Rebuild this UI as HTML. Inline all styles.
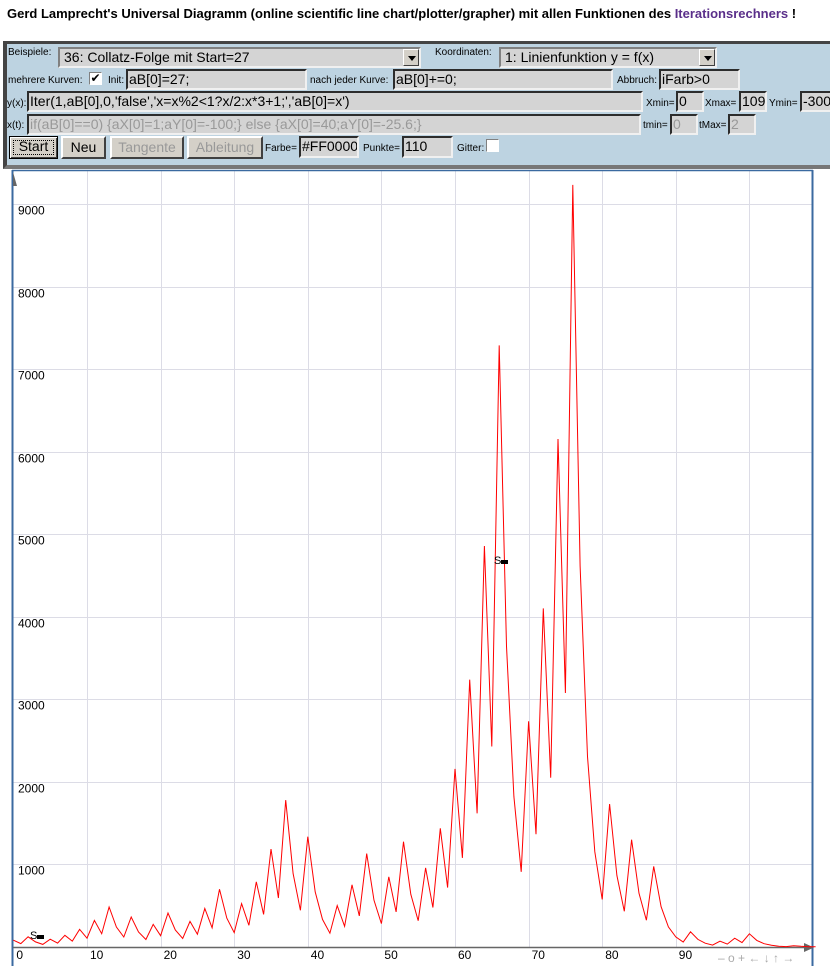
<!DOCTYPE html>
<html><head><meta charset="utf-8">
<style>
*{box-sizing:border-box}
body{margin:0;width:830px;height:966px;overflow:hidden;background:#fff;font-family:"Liberation Sans",Arial,sans-serif;position:relative}
.t{position:absolute;left:7px;top:6px;font-weight:bold;font-size:13px;color:#000;white-space:nowrap}
.t a{color:#5a2f8a;text-decoration:none}
.panel{position:absolute;left:3px;top:41px;width:840px;height:128px;background:#bdd3e1;border-top:3px solid #444;border-left:4px solid #444;border-bottom:4px solid #777}
.a{position:absolute;white-space:nowrap}
.l{font-size:10px;color:#000}
.in{position:absolute;height:21px;background:#d4d4d4;border:2px inset #eee;border-color:#808080 #f0f0f0 #f0f0f0 #808080;font-size:14px;line-height:17px;padding-left:1px;white-space:nowrap;overflow:hidden;color:#000}
.dis{color:#999}
.sel{position:absolute;height:21px;background:#d4d4d4;border:2px solid;border-color:#808080 #f0f0f0 #f0f0f0 #808080;font-size:14px;line-height:17px;padding-left:4px;white-space:nowrap}
.sel i{position:absolute;right:0;top:0;width:16px;height:17px;background:#d4d0c8;border:1px solid;border-color:#fff #404040 #404040 #fff}
.sel i:after{content:"";position:absolute;left:4px;top:6px;border:4px solid transparent;border-top:5px solid #000}
.btn{position:absolute;height:23px;background:#d4d0c8;border:2px solid;border-color:#fff #404040 #404040 #fff;font-size:14px;text-align:center;line-height:19px}
.cb{position:absolute;width:13px;height:13px;background:#fff;border:1px solid;border-color:#808080 #fff #fff #808080;font-size:12px;line-height:11px;text-align:center}
</style></head><body>
<div class="t">Gerd Lamprecht's Universal Diagramm (online scientific line chart/plotter/grapher) mit allen Funktionen des <a>Iterationsrechners</a> !</div>
<div class="panel"></div>
<div class="a l" style="left:8px;top:47px">Beispiele:</div>
<div class="sel" style="left:58px;top:47px;width:363px">36: Collatz-Folge mit Start=27<i></i></div>
<div class="a l" style="left:435px;top:47px">Koordinaten:</div>
<div class="sel" style="left:499px;top:47px;width:218px">1: Linienfunktion y = f(x)<i></i></div>

<div class="a l" style="left:8px;top:75px">mehrere Kurven:</div>
<div class="cb" style="left:89px;top:72px">✔</div>
<div class="a l" style="left:108px;top:75px">Init:</div>
<div class="in" style="left:126px;top:69px;width:181px">aB[0]=27;</div>
<div class="a l" style="left:310px;top:75px">nach jeder Kurve:</div>
<div class="in" style="left:393px;top:69px;width:220px">aB[0]+=0;</div>
<div class="a l" style="left:617px;top:75px">Abbruch:</div>
<div class="in" style="left:659px;top:69px;width:81px">iFarb&gt;0</div>

<div class="a l" style="left:7px;top:98px">y(x):</div>
<div class="in" style="left:27px;top:91px;width:616px">Iter(1,aB[0],0,'false','x=x%2&lt;1?x/2:x*3+1;','aB[0]=x')</div>
<div class="a l" style="left:646px;top:98px">Xmin=</div>
<div class="in" style="left:676px;top:91px;width:28px">0</div>
<div class="a l" style="left:705px;top:98px">Xmax=</div>
<div class="in" style="left:739px;top:91px;width:28px">109</div>
<div class="a l" style="left:769px;top:98px">Ymin=</div>
<div class="in" style="left:800px;top:91px;width:40px">-300</div>

<div class="a l" style="left:7px;top:120px">x(t):</div>
<div class="in dis" style="left:27px;top:114px;width:614px">if(aB[0]==0) {aX[0]=1;aY[0]=-100;} else {aX[0]=40;aY[0]=-25.6;}</div>
<div class="a l" style="left:643px;top:120px">tmin=</div>
<div class="in dis" style="left:670px;top:114px;width:28px">0</div>
<div class="a l" style="left:699px;top:120px">tMax=</div>
<div class="in dis" style="left:728px;top:114px;width:28px">2</div>

<div class="btn" style="left:9px;top:136px;width:49px;border:1px solid #000;outline:1px dotted #000;outline-offset:-5px;box-shadow:inset 1px 1px #fff,inset -1px -1px #404040">Start</div>
<div class="btn" style="left:61px;top:136px;width:45px">Neu</div>
<div class="btn" style="left:110px;top:136px;width:74px;color:#999">Tangente</div>
<div class="btn" style="left:187px;top:136px;width:76px;color:#999">Ableitung</div>
<div class="a l" style="left:265px;top:143px">Farbe=</div>
<div class="in" style="left:299px;top:136px;width:60px;height:22px">#FF0000</div>
<div class="a l" style="left:363px;top:143px">Punkte=</div>
<div class="in" style="left:402px;top:136px;width:51px;height:22px">110</div>
<div class="a l" style="left:457px;top:143px">Gitter:</div>
<div class="cb" style="left:486px;top:139px"></div>

<svg id="ch" style="position:absolute;left:0;top:0" width="830" height="966" xmlns="http://www.w3.org/2000/svg" font-family="Liberation Sans,Arial,sans-serif" font-size="12">
<g id="grid" stroke="#dcdce6" stroke-width="1"></g>
<g id="lab" fill="#000"></g>
<line x1="12.5" y1="170" x2="12.5" y2="966" stroke="#3b6aa0" stroke-width="2"/>
<line x1="12" y1="170.5" x2="813" y2="170.5" stroke="#3b6aa0" stroke-width="1.5"/>
<line x1="812.5" y1="170" x2="812.5" y2="966" stroke="#3b6aa0" stroke-width="2"/>
<polygon points="13,172 17,186 13,186" fill="#666"/>
<line x1="13" y1="947.5" x2="808" y2="947.5" stroke="#666" stroke-width="1.5"/>
<polygon points="814,947.5 804,943 804,952" fill="#666"/>
<polyline id="pl" fill="none" stroke="#ff0000" stroke-width="1" points=""/>
<text x="30" y="939" font-size="11">S</text><rect x="37" y="935" width="7" height="4" fill="#000"/>
<text x="494" y="564" font-size="11">S</text><rect x="501" y="560" width="7" height="4" fill="#000"/>
<text x="718" y="962" fill="#aaa" font-size="12">– o + ← ↓ ↑ →</text>
</svg>
<script>
(function(){
var ns="http://www.w3.org/2000/svg";
function X(v){return 13.4+7.36*v}
function Y(v){return 947-0.08255*v}
var g=document.getElementById('grid'),lab=document.getElementById('lab');
function el(n,a,p){var e=document.createElementNS(ns,n);for(var k in a)e.setAttribute(k,a[k]);p.appendChild(e);return e}
for(var i=1;i<=10;i++){var x=Math.round(X(i*10))+.5;if(x<812)el('line',{x1:x,y1:171,x2:x,y2:947},g)}
for(var j=1;j<=9;j++){var y=Math.round(Y(j*1000))+.5;el('line',{x1:13,y1:y,x2:812,y2:y},g);var t=el('text',{x:18,y:y+10},lab);t.textContent=j*1000}
for(var i=0;i<=9;i++){var t=el('text',{x:X(i*10)+3,y:959},lab);t.textContent=i*10}
var s=[27],v=27;for(var k=0;k<120;k++){v=v%2?v*3+1:v/2;s.push(v)}
var p=[];for(var i=0;i<=109;i++){p.push(X(i).toFixed(1)+','+Y(s[i+1]).toFixed(1))}
document.getElementById('pl').setAttribute('points',p.join(' '));
})();
</script>
</body></html>
